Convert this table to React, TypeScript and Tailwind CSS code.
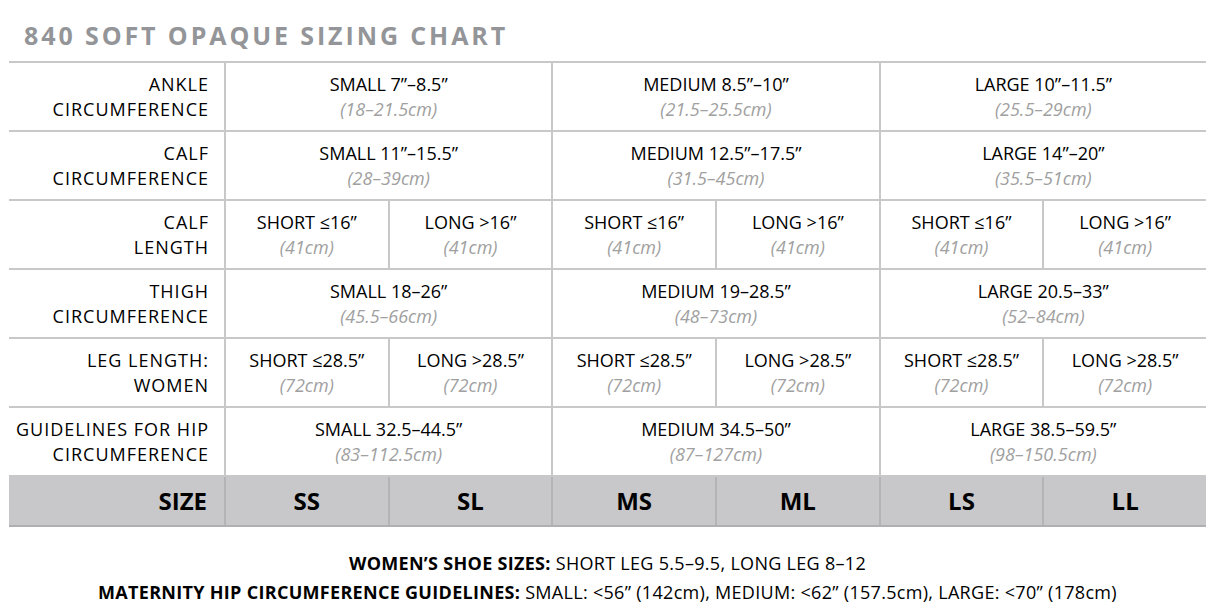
import React from 'react';

interface Cell {
    main: string;
    sub: string;
    span: 1 | 2;
}

interface Row {
    label: [string, string];
    cells: Cell[];
}

const rows: Row[] = [
    {
        label: ['ANKLE', 'CIRCUMFERENCE'],
        cells: [
            { main: 'SMALL 7”–8.5”', sub: '(18–21.5cm)', span: 2 },
            { main: 'MEDIUM 8.5”–10”', sub: '(21.5–25.5cm)', span: 2 },
            { main: 'LARGE 10”–11.5”', sub: '(25.5–29cm)', span: 2 },
        ],
    },
    {
        label: ['CALF', 'CIRCUMFERENCE'],
        cells: [
            { main: 'SMALL 11”–15.5”', sub: '(28–39cm)', span: 2 },
            { main: 'MEDIUM 12.5”–17.5”', sub: '(31.5–45cm)', span: 2 },
            { main: 'LARGE 14”–20”', sub: '(35.5–51cm)', span: 2 },
        ],
    },
    {
        label: ['CALF', 'LENGTH'],
        cells: [
            { main: 'SHORT ≤16”', sub: '(41cm)', span: 1 },
            { main: 'LONG >16”', sub: '(41cm)', span: 1 },
            { main: 'SHORT ≤16”', sub: '(41cm)', span: 1 },
            { main: 'LONG >16”', sub: '(41cm)', span: 1 },
            { main: 'SHORT ≤16”', sub: '(41cm)', span: 1 },
            { main: 'LONG >16”', sub: '(41cm)', span: 1 },
        ],
    },
    {
        label: ['THIGH', 'CIRCUMFERENCE'],
        cells: [
            { main: 'SMALL 18–26”', sub: '(45.5–66cm)', span: 2 },
            { main: 'MEDIUM 19–28.5”', sub: '(48–73cm)', span: 2 },
            { main: 'LARGE 20.5–33”', sub: '(52–84cm)', span: 2 },
        ],
    },
    {
        label: ['LEG LENGTH:', 'WOMEN'],
        cells: [
            { main: 'SHORT ≤28.5”', sub: '(72cm)', span: 1 },
            { main: 'LONG >28.5”', sub: '(72cm)', span: 1 },
            { main: 'SHORT ≤28.5”', sub: '(72cm)', span: 1 },
            { main: 'LONG >28.5”', sub: '(72cm)', span: 1 },
            { main: 'SHORT ≤28.5”', sub: '(72cm)', span: 1 },
            { main: 'LONG >28.5”', sub: '(72cm)', span: 1 },
        ],
    },
    {
        label: ['GUIDELINES FOR HIP', 'CIRCUMFERENCE'],
        cells: [
            { main: 'SMALL 32.5–44.5”', sub: '(83–112.5cm)', span: 2 },
            { main: 'MEDIUM 34.5–50”', sub: '(87–127cm)', span: 2 },
            { main: 'LARGE 38.5–59.5”', sub: '(98–150.5cm)', span: 2 },
        ],
    },
];

const sizes = ['SS', 'SL', 'MS', 'ML', 'LS', 'LL'];

export default function App() {
    return (
        <div className="w-[1215px] h-[608px] bg-white text-black font-['Open_Sans',sans-serif] overflow-hidden">
            {/* Title */}
            <h1 className="pl-[24px] pt-[20px] text-[25px] leading-[30px] font-bold tracking-[2.9px] text-[#939598]">
                840 SOFT OPAQUE SIZING CHART
            </h1>

            {/* Chart */}
            <div className="mx-[9px] mt-[11px] border-t-2 border-[#c8c8c8]">
                {rows.map((row, i) => (
                    <div
                        key={i}
                        className="grid grid-cols-[215px_repeat(6,minmax(0,1fr))] h-[69px] border-b-2 border-[#c8c8c8] text-[18px] leading-[25px]"
                    >
                        <div className="flex flex-col items-end justify-center pr-[15px] tracking-[1px]">
                            <span>{row.label[0]}</span>
                            <span>{row.label[1]}</span>
                        </div>
                        {row.cells.map((cell, j) => (
                            <div
                                key={j}
                                className={`flex flex-col items-center justify-center border-l-2 border-[#c8c8c8] ${
                                    cell.span === 2 ? 'col-span-2' : ''
                                }`}
                            >
                                <span>{cell.main}</span>
                                <span className="italic text-[#a0a0a0]">{cell.sub}</span>
                            </div>
                        ))}
                    </div>
                ))}

                {/* Size row */}
                <div className="grid grid-cols-[215px_repeat(6,minmax(0,1fr))] h-[50px] bg-[#c8c8ca] border-b-2 border-[#b0b0b2] text-[24px] font-bold">
                    <div className="flex items-center justify-end pr-[17px]">SIZE</div>
                    {sizes.map((s) => (
                        <div key={s} className="flex items-center justify-center border-l-2 border-[#b4b4b6]">
                            {s}
                        </div>
                    ))}
                </div>
            </div>

            {/* Notes */}
            <div className="mt-[22px] text-center text-[18px] leading-[29px] tracking-[0.3px]">
                <p>
                    <span className="font-bold">WOMEN’S SHOE SIZES:</span> SHORT LEG 5.5–9.5, LONG LEG 8–12
                </p>
                <p>
                    <span className="font-bold">MATERNITY HIP CIRCUMFERENCE GUIDELINES:</span> SMALL: &lt;56” (142cm), MEDIUM: &lt;62” (157.5cm), LARGE: &lt;70” (178cm)
                </p>
            </div>
        </div>
    );
}
